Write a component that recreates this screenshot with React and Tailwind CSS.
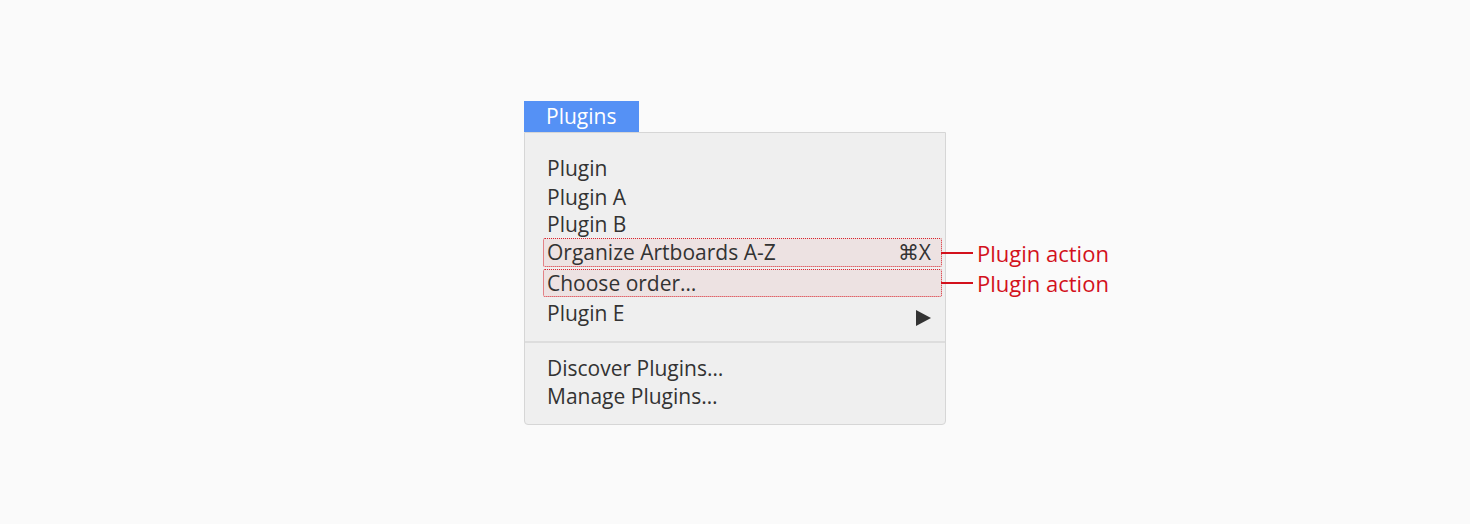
import React from "react";

const font = { fontFamily: '"Open Sans", "Liberation Sans", sans-serif' };

function Row({ children, className = "" }) {
  return (
    <div className={`flex items-center pl-[22px] pr-[14px] text-[#333] ${className}`}>
      {children}
    </div>
  );
}

function Annotation() {
  return (
    <div className="absolute left-full top-1/2 flex -translate-y-1/2 items-center whitespace-nowrap">
      <div className="h-[2px] w-[32px] bg-[#d3111c]" />
      <span className="ml-[4px] text-[22px] text-[#d3111c]">Plugin action</span>
    </div>
  );
}

function Highlighted({ children, className = "" }) {
  return (
    <div
      className={`relative ml-[18px] mr-[3px] flex items-center rounded-[2px] border border-dotted border-[#d9232d] bg-[#ede2e2] pl-[3px] pr-[10px] text-[#333] ${className}`}
    >
      {children}
      <Annotation />
    </div>
  );
}

export default function App() {
  return (
    <div className="flex h-[524px] justify-center bg-[#fafafa] pt-[101px]" style={font}>
      <div className="w-[422px] text-[21px] leading-none">
        <div className="flex h-[31px] w-[115px] items-center bg-[#5591f5] pl-[22px] text-white">
          Plugins
        </div>
        <div className="rounded-b-[4px] border border-[#d6d6d6] bg-[#efefef] pt-[21px] pb-[14px]">
          <Row className="h-[29px] text-[#1f1f1f]">Plugin</Row>
          <Row className="h-[28px]">Plugin A</Row>
          <Row className="h-[27px]">Plugin B</Row>
          <Highlighted className="h-[29px] justify-between">
            <span>Organize Artboards A-Z</span>
            <span>⌘X</span>
          </Highlighted>
          <Highlighted className="mt-[2px] h-[28px]">
            <span>Choose order…</span>
          </Highlighted>
          <Row className="h-[33px] justify-between">
            <span>Plugin E</span>
            <svg width="15" height="16" viewBox="0 0 15 16" className="mt-[8px]">
              <polygon points="0,0 15,8 0,16" fill="#333" />
            </svg>
          </Row>
          <div className="mt-[11px] mb-[11px] h-[2px] bg-[#dddddd]" />
          <Row className="h-[28px]">Discover Plugins…</Row>
          <Row className="h-[28px]">Manage Plugins…</Row>
        </div>
      </div>
    </div>
  );
}
